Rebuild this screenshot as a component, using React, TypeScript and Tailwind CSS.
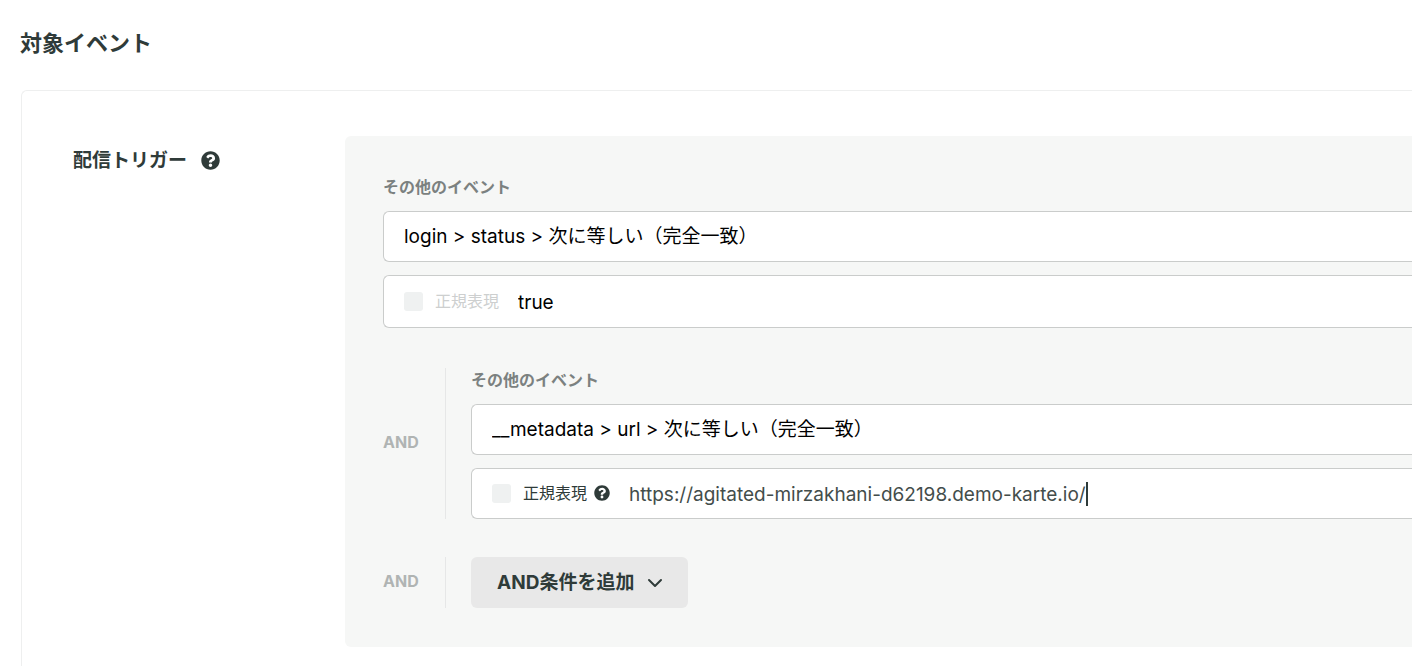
import { useId, useState } from "react";
import type { ReactNode } from "react";
import { ChevronDown } from "lucide-react";
import { FaQuestionCircle } from "react-icons/fa";

type Condition = {
  event: string;
  value: string;
  regexpDisabled?: boolean;
  editing?: boolean;
};

const first: Condition = {
  event: "login > status > 次に等しい（完全一致）",
  value: "true",
  regexpDisabled: true,
};

const second: Condition = {
  event: "__metadata > url > 次に等しい（完全一致）",
  value: "https://agitated-mirzakhani-d62198.demo-karte.io/",
  editing: true,
};

function HelpButton({ className }: { className: string }) {
  return (
    <button type="button" aria-label="ヘルプ" className="shrink-0 text-[#2f3b39]">
      <FaQuestionCircle className={className} />
    </button>
  );
}

function ConditionFields({ condition }: { condition: Condition }) {
  const id = useId();
  const [value, setValue] = useState(condition.value);
  const [regexp, setRegexp] = useState(false);
  const { event, regexpDisabled, editing } = condition;

  return (
    <div className="flex flex-col">
      <label htmlFor={`${id}-event`} className="mb-3 text-base leading-6 font-bold text-[#7b8180]">
        その他のイベント
      </label>
      <select
        id={`${id}-event`}
        className="mb-[13px] h-[51px] w-full appearance-none rounded-l-md border border-r-0 border-[#cacccb] bg-white px-5 pt-[2px] text-[19px] text-black"
      >
        <option>{event}</option>
      </select>
      <div
        className={`flex items-center rounded-l-md border border-r-0 border-[#cacccb] bg-white px-5 ${
          regexpDisabled ? "h-[53px]" : "h-[51px]"
        }`}
      >
        <input
          id={`${id}-regexp`}
          type="checkbox"
          checked={regexp}
          disabled={regexpDisabled}
          onChange={(e) => setRegexp(e.target.checked)}
          className="size-[19px] shrink-0 appearance-none rounded-[3px] bg-[#eff1f1] checked:bg-[#2f3b39]"
        />
        <label
          htmlFor={`${id}-regexp`}
          className={`ml-3 shrink-0 pb-[2px] text-base ${regexpDisabled ? "text-[#cdcfcf]" : "text-[#2f3b39]"}`}
        >
          正規表現
        </label>
        {!regexpDisabled && (
          <span className="ml-[7px] flex pb-[2px]">
            <HelpButton className="size-4" />
          </span>
        )}
        <input
          type="text"
          aria-label="値"
          value={value}
          onChange={(e) => setValue(e.target.value)}
          className={`ml-[19px] field-sizing-content pt-1 text-[19px] caret-transparent outline-none ${
            editing ? "text-[#434d4b]" : "text-black"
          }`}
        />
        {editing && <span className="h-6 w-[2px] bg-[#2f3b39]" />}
      </div>
    </div>
  );
}

function AndRow({ children }: { children: ReactNode }) {
  return (
    <div className="flex">
      <div className="flex w-[62px] shrink-0 items-center pb-[3px] text-base font-bold text-[#b0b4b3]">AND</div>
      <div className="min-w-0 grow border-l border-[#e6e7e7] pl-[25px]">{children}</div>
    </div>
  );
}

export default function App() {
  return (
    <main className="min-h-screen overflow-hidden bg-white pt-[27px] pl-5 font-['Inter','Noto_Sans_CJK_JP',sans-serif] text-[#2f3b39]">
      <h1 className="text-[22px] leading-8 font-bold">対象イベント</h1>
      <section className="mt-[31px] ml-px flex min-h-[calc(100vh-90px)] rounded-tl-md border-t border-l border-[#eeefef] pt-[45px] pb-5 pl-[51px]">
        <div className="flex w-[272px] shrink-0 items-center self-start pt-[9px]">
          <h2 className="text-[19px] leading-8 font-bold">配信トリガー</h2>
          <span className="ml-[14px] flex pb-[2px]">
            <HelpButton className="size-[19px]" />
          </span>
        </div>
        <div className="flex min-w-0 grow flex-col self-start rounded-l-md bg-[#f6f7f6] py-[39px] pl-[38px]">
          <ConditionFields condition={first} />
          <div className="mt-10 flex flex-col gap-[38px]">
            <AndRow>
              <ConditionFields condition={second} />
            </AndRow>
            <AndRow>
              <button
                type="button"
                className="flex h-[51px] items-center gap-[9px] rounded-md bg-[#e8e8e8] pr-[21px] pl-[26px] text-[19px] font-bold"
              >
                <span className="pt-[2px]">AND条件を追加</span>
                <ChevronDown size={24} />
              </button>
            </AndRow>
          </div>
        </div>
      </section>
    </main>
  );
}
